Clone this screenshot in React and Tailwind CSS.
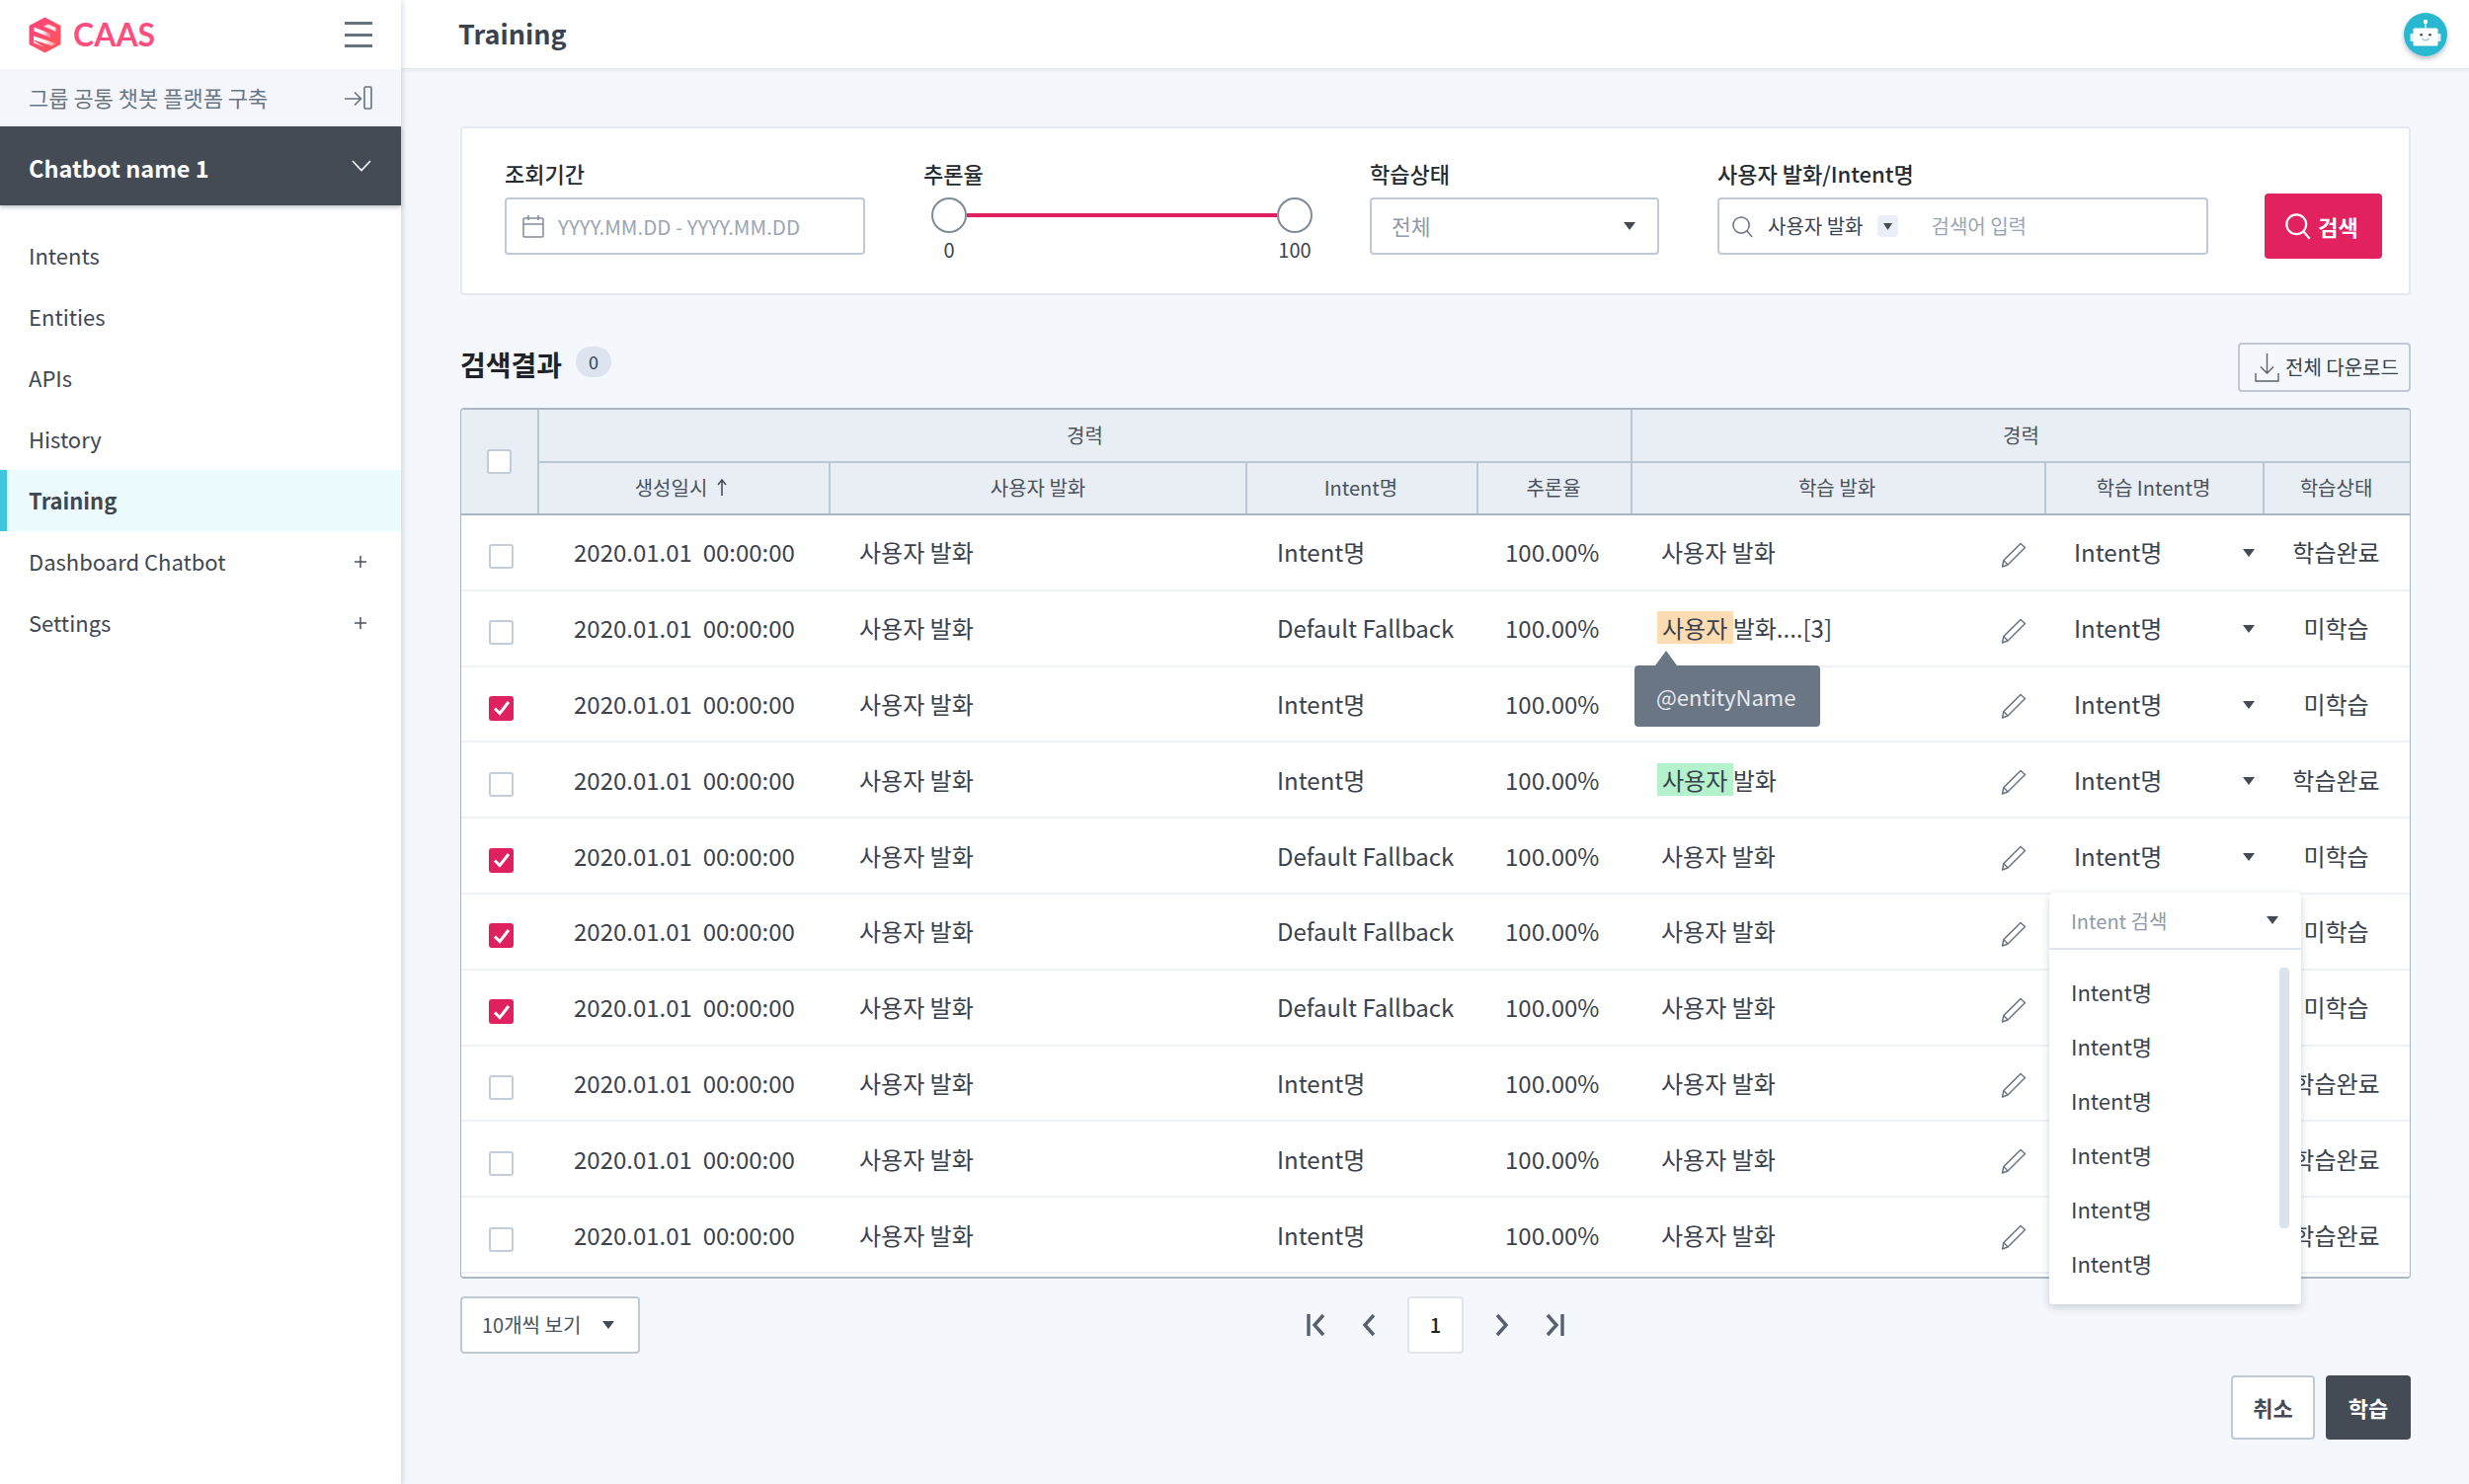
const F = "font-['Noto_Sans_CJK_KR','Noto_Sans',sans-serif]";

function Caret({ className = '' }) {
  return (
    <svg width="12" height="8" viewBox="0 0 12 8" className={`shrink-0 ${className}`}>
      <path d="M0 0H12L6 8Z" fill="#444b55" />
    </svg>
  );
}

function Logo() {
  return (
    <svg width="33" height="37" viewBox="0 0 33 37">
      <defs>
        <linearGradient id="lg" x1="0" y1="0" x2="1" y2="1">
          <stop offset="0" stopColor="#ff3f7f" />
          <stop offset="1" stopColor="#ff5a55" />
        </linearGradient>
        <linearGradient id="lw" x1="0" y1="0" x2="1" y2="0">
          <stop offset="0" stopColor="#ffffff" />
          <stop offset="0.55" stopColor="#ffffff" stopOpacity="0.9" />
          <stop offset="1" stopColor="#ffffff" stopOpacity="0.2" />
        </linearGradient>
      </defs>
      <path d="M16.5 0.5 L32.5 9 V28 L16.5 36.5 L0.5 28 V9 Z" fill="url(#lg)" />
      <path d="M5.5 10.5 L22 17 L22 21 L5.5 14.5 Z" fill="url(#lw)" />
      <path d="M20 7.5 L27.5 11 V15 L15 9.5 Z" fill="#fff" opacity="0.85" />
      <path d="M5 19.5 L28 27 L24 29.5 L5 23.5 Z" fill="url(#lw)" />
      <path d="M5 24 L12 28.5 L16.5 31 L5 26.5 Z" fill="#fff" opacity="0.85" />
    </svg>
  );
}

function Robot() {
  return (
    <svg width="44" height="44" viewBox="0 0 44 44">
      <circle cx="22" cy="22" r="22" fill="#29b8d0" />
      <path d="M22 9V16" stroke="#dff5f8" strokeWidth="1.4" />
      <circle cx="22" cy="9" r="2.2" fill="#fff" />
      <rect x="6.5" y="21" width="3.5" height="8" rx="1" fill="#d6f2f6" />
      <rect x="34" y="21" width="3.5" height="8" rx="1" fill="#d6f2f6" />
      <rect x="9.5" y="15.5" width="25" height="18" rx="1.5" fill="#fff" />
      <circle cx="17.7" cy="22.3" r="1.3" fill="#39474f" />
      <circle cx="26.5" cy="22.3" r="1.3" fill="#39474f" />
      <path d="M18.5 26 Q22 30 25.5 26" fill="none" stroke="#8fc9d6" strokeWidth="1.2" />
    </svg>
  );
}

function Search({ size = 24, color = '#6b7685', sw = 1.6 }) {
  return (
    <svg width={size} height={size} viewBox="0 0 24 24" fill="none" stroke={color} strokeWidth={sw} className="shrink-0">
      <circle cx="10.5" cy="10.5" r="8.5" />
      <path d="M16.5 16.5L22 23" />
    </svg>
  );
}

function Pencil() {
  return (
    <svg width="26" height="26" viewBox="0 0 26 26" fill="none" stroke="#6b7685" strokeWidth="1.5" className="shrink-0">
      <path d="M20 1.5 L24.5 5.5 L7 23 L1.5 25 L2.8 18.5 Z" strokeLinejoin="round" />
      <path d="M2.8 18.5 L7 23" />
    </svg>
  );
}

function Check({ on, className = '' }) {
  if (on)
    return (
      <span className={`flex h-[25px] w-[25px] items-center justify-center rounded-[3px] bg-[#e0215f] ${className}`}>
        <svg width="18" height="16" viewBox="0 0 18 16" fill="none" stroke="#fff" strokeWidth="3">
          <path d="M2 8.5L7 13.5L16 2" />
        </svg>
      </span>
    );
  return <span className={`block h-[25px] w-[25px] rounded-[3px] border-2 border-[#c3cdd9] bg-white ${className}`} />;
}

function NavItem({ label, active, plus }) {
  return (
    <div
      className={`flex h-[62px] items-center justify-between pr-[35px] text-[22px] text-[#3e4752] ${
        active ? 'border-l-[7px] border-[#3ec6dc] bg-[#ecfbfd] pl-[22px] font-bold' : 'pl-[29px]'
      }`}
    >
      <span className="pb-[1px]">{label}</span>
      {plus && (
        <svg width="12" height="12" viewBox="0 0 12 12" stroke="#4a5360" strokeWidth="1.5">
          <path d="M6 0V12M0 6H12" />
        </svg>
      )}
    </div>
  );
}

function Label({ children }) {
  return <div className="mb-[10px] h-[30px] text-[22px] leading-[30px] font-medium text-[#262b31]">{children}</div>;
}

const rows = [
  { i: 'Intent명', s: '학습완료' },
  { i: 'Default Fallback', s: '미학습', mark: 'orange' },
  { i: 'Intent명', s: '미학습', on: true, blank: true },
  { i: 'Intent명', s: '학습완료', mark: 'green' },
  { i: 'Default Fallback', s: '미학습', on: true },
  { i: 'Default Fallback', s: '미학습', on: true, under: true },
  { i: 'Default Fallback', s: '미학습', on: true, under: true },
  { i: 'Intent명', s: '학습완료', under: true },
  { i: 'Intent명', s: '학습완료', under: true },
  { i: 'Intent명', s: '학습완료', under: true },
];

function Row({ r }) {
  return (
    <div className="flex h-[76.8px] shrink-0 items-center border-b-2 border-[#eef2f7] text-[24px] text-[#3a424d]">
      <div className="flex w-[79px] shrink-0 justify-center pt-[9px] pl-[2px]">
        <Check on={r.on} />
      </div>
      <div className="w-[293px] shrink-0 pl-[35px] whitespace-pre">2020.01.01  00:00:00</div>
      <div className="w-[422px] shrink-0 pl-[31px]">사용자 발화</div>
      <div className="w-[234px] shrink-0 pl-[32px]">{r.i}</div>
      <div className="w-[156px] shrink-0 pl-[29px]">100.00%</div>
      <div className="flex w-[419px] shrink-0 items-center justify-between pr-[18px] pl-[27px]">
        <div className="whitespace-pre">
          {r.blank ? null : r.mark ? (
            <>
              <span className={`inline-block h-[33px] pl-[5px] leading-[33px] whitespace-pre ${r.mark === 'orange' ? 'bg-[#fddcb4]' : 'bg-[#b4f1cd]'}`}>
                {'사용자 '}
              </span>
              {r.mark === 'orange' ? '발화....[3]' : '발화'}
            </>
          ) : (
            <span className="pl-[4px]">사용자 발화</span>
          )}
        </div>
        <span className="pt-[5px]">
          <Pencil />
        </span>
      </div>
      <div className="flex w-[221px] shrink-0 items-center justify-between pr-[8px] pl-[30px]">
        {!r.under && (
          <>
            <span>Intent명</span>
            <Caret className="mt-[2px]" />
          </>
        )}
      </div>
      <div className="flex-1 text-center">{r.s}</div>
    </div>
  );
}

export default function App() {
  return (
    <div className={`flex h-[1503px] w-full overflow-hidden bg-[#f4f7fb] ${F}`}>
      {/* Sidebar */}
      <aside className="z-20 flex w-[406px] shrink-0 flex-col bg-white shadow-[2px_0_5px_rgba(120,135,155,0.25)]">
        <div className="flex h-[70px] items-center justify-between pr-[29px] pl-[29px]">
          <div className="flex items-center gap-[12px]">
            <Logo />
            <span className="font-['Lato',sans-serif] text-[32px] leading-none font-bold text-[#ff4d7d]">CAAS</span>
          </div>
          <div className="flex h-[26px] w-[28px] flex-col justify-between">
            <span className="h-[3px] bg-[#67727f]" />
            <span className="h-[3px] bg-[#67727f]" />
            <span className="h-[3px] bg-[#67727f]" />
          </div>
        </div>
        <div className="flex h-[58px] items-center justify-between bg-[#f4f6fb] pr-[29px] pl-[29px] text-[22px] text-[#6b7685]">
          <span className="pb-[2px]">그룹 공통 챗봇 플랫폼 구축</span>
          <svg width="28" height="24" viewBox="0 0 28 24" fill="none" stroke="#67727f" strokeWidth="1.6">
            <path d="M0 13H16M10 6.5L16.5 13L10 19.5" />
            <rect x="20" y="1" width="7" height="22" rx="1" />
          </svg>
        </div>
        <div className="flex h-[80px] items-center justify-between bg-[#444b55] pr-[30px] pl-[29px] text-[23.5px] font-bold text-white shadow-[0_2px_4px_rgba(70,80,95,0.35)]">
          <span className="pt-[5px]">Chatbot name 1</span>
          <svg width="20" height="12" viewBox="0 0 20 12" fill="none" stroke="#fff" strokeWidth="1.6">
            <path d="M1 1L10 10.5L19 1" />
          </svg>
        </div>
        <nav className="mt-[20px]">
          <NavItem label="Intents" />
          <NavItem label="Entities" />
          <NavItem label="APIs" />
          <NavItem label="History" />
          <NavItem label="Training" active />
          <NavItem label="Dashboard Chatbot" plus />
          <NavItem label="Settings" plus />
        </nav>
      </aside>

      {/* Main */}
      <main className="flex min-w-0 flex-1 flex-col">
        <header className="flex h-[70px] shrink-0 items-center justify-between border-b border-[#e6e9ee] bg-white pr-[22px] pl-[58px] shadow-[0_1px_3px_rgba(120,135,155,0.15)]">
          <h1 className="text-[27px] font-bold text-[#3a424d]">Training</h1>
          <span className="block rounded-full shadow-[0_3px_5px_rgba(60,80,100,0.35)]">
            <Robot />
          </span>
        </header>

        <div className="flex flex-1 flex-col pt-[58px] pr-[59px] pl-[60px]">
          {/* Filters */}
          <section className="flex h-[171px] shrink-0 items-start rounded-[4px] border-2 border-[#e3e9f0] bg-white pt-[30px] pl-[43px]">
            <div className="w-[424px] shrink-0">
              <Label>조회기간</Label>
              <div className="flex h-[58px] w-[365px] items-center gap-[14px] rounded-[4px] border-2 border-[#c0cad7] pl-[16px] text-[20.5px] text-[#9aa5b3]">
                <svg width="22" height="24" viewBox="0 0 22 24" fill="none" stroke="#7f8b99" strokeWidth="1.5">
                  <rect x="1" y="4" width="20" height="19" rx="1" />
                  <path d="M1 10H21M6 1V6M16 1V6" />
                </svg>
                <span>YYYY.MM.DD - YYYY.MM.DD</span>
              </div>
            </div>
            <div className="w-[452px] shrink-0">
              <Label>추론율</Label>
              <div className="ml-[8px] flex w-[386px] items-center">
                <span className="h-[36px] w-[36px] shrink-0 rounded-full border-2 border-[#7f8b99] bg-white" />
                <span className="h-[4px] flex-1 bg-[#e0215f]" />
                <span className="h-[36px] w-[36px] shrink-0 rounded-full border-2 border-[#7f8b99] bg-white" />
              </div>
              <div className="mt-[2px] ml-[8px] flex w-[386px] justify-between text-[20px] leading-[30px] text-[#3a424d]">
                <span className="w-[36px] text-center">0</span>
                <span className="w-[36px] text-center whitespace-nowrap">100</span>
              </div>
            </div>
            <div className="w-[352px] shrink-0">
              <Label>학습상태</Label>
              <div className="flex h-[58px] w-[293px] items-center justify-between rounded-[4px] border-2 border-[#c0cad7] pr-[22px] pl-[20px] text-[21.5px] text-[#8f9aa8]">
                <span>전체</span>
                <Caret />
              </div>
            </div>
            <div className="w-[554px] shrink-0">
              <Label>사용자 발화/Intent명</Label>
              <div className="flex h-[58px] w-[497px] items-center rounded-[4px] border-2 border-[#c0cad7] pl-[12px] text-[20px]">
                <Search size={23} />
                <span className="ml-[14px] text-[#3a424d]">사용자 발화</span>
                <span className="ml-[15px] flex h-[22px] w-[21px] items-center justify-center rounded-[4px] bg-[#e9eef7]">
                  <svg width="9" height="7" viewBox="0 0 9 7">
                    <path d="M0 0H9L4.5 7Z" fill="#444b55" />
                  </svg>
                </span>
                <span className="ml-[33px] text-[#9aa5b3]">검색어 입력</span>
              </div>
            </div>
            <button className="mt-[36px] flex h-[66px] w-[119px] shrink-0 items-center justify-center gap-[6px] rounded-[4px] bg-[#e2225e] pr-[4px] text-[22px] font-bold text-white">
              <Search size={28} color="#fff" sw={1.9} />
              <span>검색</span>
            </button>
          </section>

          {/* Result title */}
          <div className="mt-[48px] flex h-[50px] shrink-0 items-start justify-between">
            <div className="flex h-[39px] items-center gap-[14px]">
              <h2 className="mt-[5px] text-[28px] font-bold text-[#1f2328]">검색결과</h2>
              <span className="flex h-[31px] w-[36px] items-center justify-center rounded-full bg-[#dde4ef] text-[18px] text-[#3a424d]">0</span>
            </div>
            <button className="flex h-[50px] w-[175px] items-center gap-[6px] rounded-[4px] border-2 border-[#c0cad7] pl-[15px] text-[20px] text-[#3a424d]">
              <svg width="25" height="30" viewBox="0 0 25 30" fill="none" stroke="#5a6472" strokeWidth="1.4">
                <path d="M12.5 1V21M6 14.5L12.5 21L19 14.5M1 21V29H24V21" />
              </svg>
              <span className="whitespace-nowrap">전체 다운로드</span>
            </button>
          </div>

          {/* Table */}
          <div className="relative mt-[16px] h-[882px] shrink-0">
            <div className="flex h-full flex-col overflow-hidden rounded-[4px] border-x border-y-2 border-[#aab6c6] bg-white">
              <div className="flex h-[107px] shrink-0 border-b-2 border-[#aab6c6] bg-[#e9eef5] text-[20px] text-[#48515c]">
                <div className="flex w-[77px] shrink-0 items-center justify-center">
                  <Check />
                </div>
                <div className="flex-1 border-l-2 border-[#bcc7d4]">
                  <div className="flex h-[54px] border-b-2 border-[#bcc7d4]">
                    <div className="flex w-[1105px] shrink-0 items-center justify-center">경력</div>
                    <div className="flex flex-1 items-center justify-center border-l-2 border-[#bcc7d4]">경력</div>
                  </div>
                  <div className="flex h-[51px] items-center">
                    <div className="flex h-full w-[293px] shrink-0 items-center justify-center gap-[10px] pr-[6px] pb-[2px]">
                      생성일시
                      <svg width="10" height="18" viewBox="0 0 10 18" fill="none" stroke="#48515c" strokeWidth="1.6">
                        <path d="M5 1V17M1 6L5 1L9 6" />
                      </svg>
                    </div>
                    <div className="flex h-full w-[422px] shrink-0 items-center justify-center border-l-2 border-[#bcc7d4] pb-[2px]">사용자 발화</div>
                    <div className="flex h-full w-[234px] shrink-0 items-center justify-center border-l-2 border-[#bcc7d4] pr-[2px] pb-[2px]">Intent명</div>
                    <div className="flex h-full w-[156px] shrink-0 items-center justify-center border-l-2 border-[#bcc7d4] pr-[2px] pb-[2px]">추론율</div>
                    <div className="flex h-full w-[419px] shrink-0 items-center justify-center border-l-2 border-[#bcc7d4] pr-[3px] pb-[2px]">학습 발화</div>
                    <div className="flex h-full w-[221px] shrink-0 items-center justify-center border-l-2 border-[#bcc7d4] pr-[2px] pb-[2px]">학습 Intent명</div>
                    <div className="flex h-full flex-1 items-center justify-center border-l-2 border-[#bcc7d4] pr-[2px] pb-[2px]">학습상태</div>
                  </div>
                </div>
              </div>
              {rows.map((r, idx) => (
                <Row key={idx} r={r} />
              ))}
            </div>

            {/* Tooltip */}
            <div className="absolute top-[261px] left-[1189px] flex h-[62px] w-[188px] items-center rounded-[4px] bg-[#6b7685] pl-[22px] text-[22px] text-[#e4e8ed]">
              @entityName
              <svg width="22" height="15" viewBox="0 0 22 15" className="absolute -top-[15px] left-[21px]">
                <path d="M0 15L11 0L22 15Z" fill="#6b7685" />
              </svg>
            </div>

            {/* Intent dropdown */}
            <div className="absolute top-[491px] left-[1609px] h-[417px] w-[255px] rounded-[4px] bg-white text-[22px] text-[#3a424d] shadow-[0_3px_8px_rgba(90,105,125,0.28)]">
              <div className="flex h-[58px] items-center justify-between border-b-2 border-[#dde4ec] pr-[23px] pl-[22px] text-[20px] text-[#8f9aa8]">
                <span className="pt-[2px]">Intent 검색</span>
                <Caret />
              </div>
              <div className="flex flex-col pt-[15px] pl-[22px]">
                {[0, 1, 2, 3, 4, 5].map((k) => (
                  <div key={k} className="flex h-[55px] items-center">
                    Intent명
                  </div>
                ))}
              </div>
              <span className="absolute top-[76px] right-[12px] h-[264px] w-[10px] rounded-[4px] bg-[#dae2ec]" />
            </div>
          </div>

          {/* Pagination */}
          <div className="mt-[18px] grid h-[58px] shrink-0 grid-cols-3 items-center">
            <div className="flex h-[58px] w-[182px] items-center justify-between rounded-[4px] border-2 border-[#c0cad7] bg-white pr-[24px] pl-[20px] text-[20px] text-[#48515c]">
              <span className="whitespace-nowrap">10개씩 보기</span>
              <Caret />
            </div>
            <div className="flex items-center justify-center">
              <svg width="19" height="24" viewBox="0 0 19 24" fill="none" stroke="#56606e" strokeWidth="3.4" className="mr-[37px]">
                <path d="M2 1V23" />
                <path d="M17 2L8 12L17 22" />
              </svg>
              <svg width="14" height="24" viewBox="0 0 14 24" fill="none" stroke="#56606e" strokeWidth="3.4" className="mr-[32px]">
                <path d="M12 2L3 12L12 22" />
              </svg>
              <span className="flex h-[58px] w-[57px] items-center justify-center rounded-[4px] border-2 border-[#dfe5ed] bg-white text-[20px] font-medium text-[#1f2328]">1</span>
              <svg width="14" height="24" viewBox="0 0 14 24" fill="none" stroke="#56606e" strokeWidth="3.4" className="ml-[32px]">
                <path d="M2 2L11 12L2 22" />
              </svg>
              <svg width="19" height="24" viewBox="0 0 19 24" fill="none" stroke="#56606e" strokeWidth="3.4" className="ml-[37px]">
                <path d="M17 1V23" />
                <path d="M2 2L11 12L2 22" />
              </svg>
            </div>
            <div />
          </div>

          {/* Actions */}
          <div className="mt-[22px] flex shrink-0 justify-end gap-[11px]">
            <button className="h-[65px] w-[85px] rounded-[4px] border-2 border-[#c0cad7] bg-white text-[22px] font-bold text-[#444b55]">취소</button>
            <button className="h-[65px] w-[86px] rounded-[4px] bg-[#444b55] text-[22px] font-bold text-white">학습</button>
          </div>
        </div>
      </main>
    </div>
  );
}
